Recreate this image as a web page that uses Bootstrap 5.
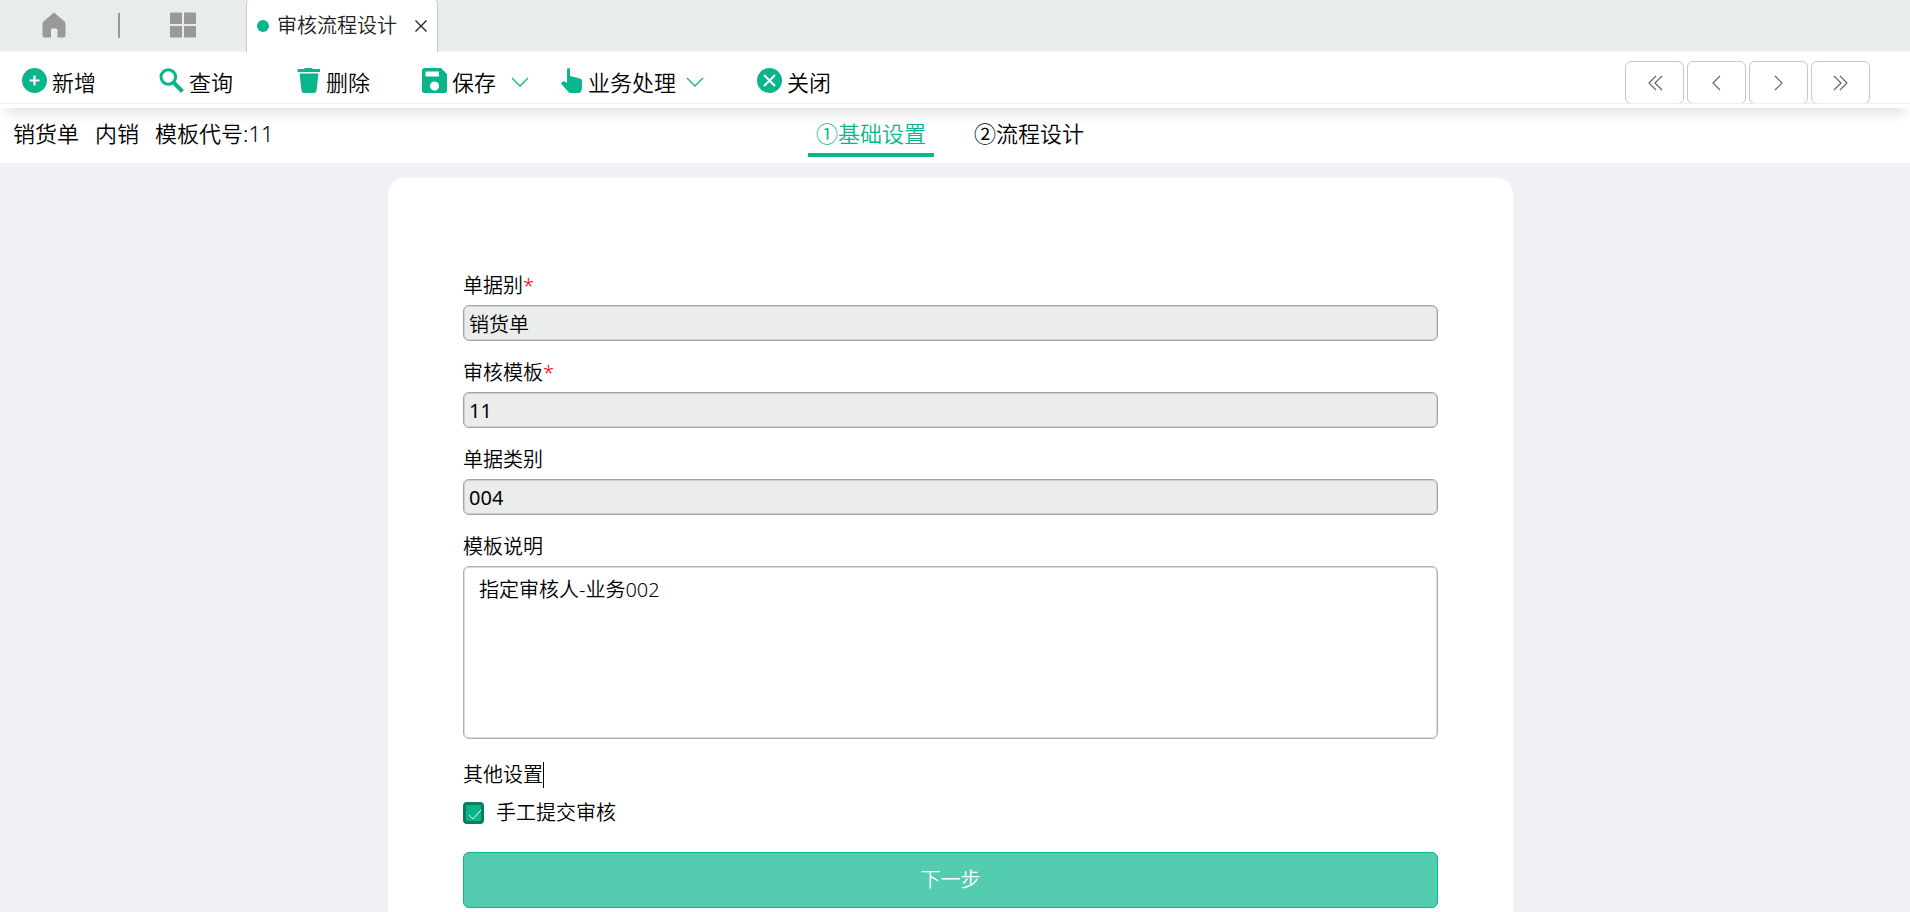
<!DOCTYPE html>
<html lang="zh-CN">
<head>
<meta charset="utf-8">
<meta name="viewport" content="width=device-width, initial-scale=1">
<title>审核流程设计</title>
<link href="https://cdn.jsdelivr.net/npm/bootstrap@5.3.0/dist/css/bootstrap.min.css" rel="stylesheet">
<style>
  :root { --brand: #0bb58b; }
  body { font-family: "Noto Sans", "Noto Sans CJK SC", sans-serif; font-weight: 350; font-size: 20px; line-height: 30px; color: #000; background: #eff1f5; }
  button, input, textarea { font-weight: inherit; }
  svg { display: block; flex: none; }

  .window-bar { height: 50px; background: #e8eceb; padding-left: 42px; }
  .window-bar .plain { color: #999; }
  .divider { width: 2px; height: 25px; margin: 0 48px 0 52px; background: #999; }
  .page-tab { height: 52px; width: 192px; padding: 0 10px; background: #fff; border: 1px solid #c4c8ca; border-width: 0 1px; border-radius: 4px 4px 0 0; color: #222; }
  .dot { width: 12px; height: 12px; background: var(--brand); }

  .toolbar { margin-top: 2px; height: 56px; background: #fff; z-index: 1; box-shadow: 0 12px 10px -5px rgba(0, 0, 0, .09); }
  .toolbar-inner { height: 52px; padding-left: 22px; padding-right: 40px; border-bottom: 1px solid #eee; overflow: hidden; }
  .plain { border: 0; background: none; padding: 0; }
  .tool { font-size: 22px; line-height: 28px; gap: 5px; color: #000; white-space: nowrap; margin-right: 63px; }
  .tool.mid { margin-right: 52px; }
  .tool.near { margin-right: 30px; }
  .tool svg { color: var(--brand); }
  .tool .arrow { margin-top: 8px; }
  .pager { gap: 3px; padding-top: 9px; }
  .pager button { width: 59px; height: 43px; background: #fff; border: 1px solid #c8c8c8; border-radius: 6px; color: #666; }

  .subheader { height: 55px; background: #fff; font-size: 22px; padding: 0 23px 0 13px; }
  .doc-info { padding-top: 10px; }
  .steps { gap: 32px; }
  .steps a { padding: 10px 8px 5px; height: 49px; color: #000; text-decoration: none; border-bottom: 4px solid transparent; }
  .steps a.active { color: var(--brand); border-color: var(--brand); }

  main { padding: 15px 9px 0 0; min-height: 0; overflow: hidden; }
  .panel { width: 100%; max-width: 1125px; padding: 93px 75px 40px; background: #fff; border-radius: 16px 16px 0 0; }
  .panel label, .section-title { display: block; margin-bottom: 4px; }
  .section-title { padding-top: 4px; margin-bottom: 8px; }
  .req { color: red; }
  .field { margin-bottom: 17px; }
  .box { display: block; width: 100%; height: 36px; padding: 0 5px; color: #000; border: 1px solid #a3a5a4; border-radius: 6px; box-shadow: inset 0 0 0 1px #cfd1d0; background: #ebedec; }
  .box.code { font-weight: 400; }
  textarea.box { height: 173px; padding: 8px 15px; background: #fff; border-color: #b0b0b0; box-shadow: inset 0 0 0 1px #dcdcdc; resize: none; }
  .caret { width: 1px; height: 26px; background: #000; }
  .tick { appearance: none; width: 21px; height: 22px; margin: 0; border: 3px solid #07805f; border-radius: 4px; background: var(--brand) url("data:image/svg+xml,%3Csvg xmlns='http://www.w3.org/2000/svg' viewBox='0 0 15 16'%3E%3Cpath d='M3 10l4 4 8-9' fill='none' stroke='%23fff'/%3E%3C/svg%3E"); }
  .next { height: 56px; background: #54ccb0; border: 1px solid var(--brand); border-radius: 6px; color: #fff; }
</style>
</head>
<body>
<div class="vh-100 d-flex flex-column">
  <div class="window-bar d-flex align-items-start flex-shrink-0">
    <nav class="d-flex align-items-center h-100">
      <button class="plain" type="button" aria-label="首页">
        <svg width="24" height="26" viewBox="0 0 24 26" fill="currentColor"><path d="M12 0.500L22.500 9.500Q23.500 10.500 23.500 12V23.500Q23.500 25.500 21.500 25.500H15.500V18Q15.500 16.500 14 16.500H10Q9 16.500 9 18V25.500H2.500Q0.500 25.500 0.500 23.500V12Q0.500 10.500 1.500 9.500Z"/></svg>
      </button>
      <span class="divider"></span>
      <button class="plain" type="button" aria-label="应用">
        <svg width="30" height="26" viewBox="0 0 30 26" fill="currentColor"><rect x="2" y="0.500" width="12" height="11.500" rx="1"/><rect x="16" y="0.500" width="12" height="11.500" rx="1"/><rect x="2" y="14" width="12" height="11.500" rx="1"/><rect x="16" y="14" width="12" height="11.500" rx="1"/></svg>
      </button>
    </nav>
    <div class="page-tab d-flex align-items-center position-relative z-2 ms-5">
      <span class="dot rounded-circle"></span>
      <span class="ms-2 text-nowrap">审核流程设计</span>
      <button class="plain ms-auto" type="button" aria-label="关闭标签"><svg width="12" height="12" viewBox="0 0 12 12" fill="none" stroke="#222" stroke-width="1.300"><path d="M.5 .5l11 11M11.500 .5l-11 11"/></svg></button>
    </div>
  </div>

  <div class="toolbar position-relative flex-shrink-0">
    <div class="toolbar-inner d-flex align-items-start">
      <div class="d-flex align-items-start pt-3">
        <button class="plain tool d-flex align-items-start" type="button">
          <svg width="25" height="25" viewBox="0 0 25 25"><circle cx="12.500" cy="12.500" r="12.500" fill="currentColor"/><path d="M12.500 7.500v10M7.500 12.500h10" stroke="#fff" stroke-width="2.200"/></svg>新增</button>
        <button class="plain tool d-flex align-items-start" type="button">
          <svg width="25" height="25" viewBox="0 0 25 25" fill="none" stroke="currentColor"><circle cx="9.300" cy="9" r="7.300" stroke-width="3"/><path d="M14.500 14.500L23.500 23.500" stroke-width="4"/></svg>查询</button>
        <button class="plain tool mid d-flex align-items-start" type="button">
          <svg width="25" height="25" viewBox="0 0 25 25" fill="currentColor"><path d="M1.500 1H8L9 0H16L17 1H24V4H1.500ZM3.500 5.500H22.500L20.500 22.500Q20.200 25 18 25H8Q6 25 5.500 22.500Z"/></svg>删除</button>
        <button class="plain tool near d-flex align-items-start" type="button">
          <svg width="25" height="25" viewBox="0 0 25 25" fill="currentColor" fill-rule="evenodd"><path d="M2.500 0H19L25 6V22.500Q25 25 22.500 25H2.500Q0 25 0 22.500V2.500Q0 0 2.500 0ZM3.500 3.500V8.500H17V3.500ZM12.500 13.500a4.500 4.500 0 1 0 .01 0Z"/></svg>保存
          <svg class="arrow ms-2" width="20" height="12" viewBox="0 0 20 12" fill="none" stroke="currentColor" stroke-width="1.300"><path d="M3 2l8 8 8-8"/></svg></button>
        <button class="plain tool mid d-flex align-items-start" type="button">
          <svg width="24" height="25" viewBox="0 0 24 25" fill="currentColor"><path d="M8 1.500Q8 0 9.500 0T11 1.500V8L21 10.500Q23 11 23 13V20Q22.500 25 19.500 25H11.500Q10 25 9 23.500L2 15.500Q3.500 12.500 6 13.500L8 15Z"/></svg>业务处理
          <svg class="arrow ms-1" width="20" height="12" viewBox="0 0 20 12" fill="none" stroke="currentColor" stroke-width="1.300"><path d="M2 2l8 8 8-8"/></svg></button>
        <button class="plain tool d-flex align-items-start" type="button">
          <svg width="25" height="25" viewBox="0 0 25 25"><circle cx="12.500" cy="12.500" r="12.500" fill="currentColor"/><path d="M7 7l11 11M18 7L7 18" stroke="#fff" stroke-width="2"/></svg>关闭</button>
      </div>
      <div class="pager d-flex ms-auto">
        <button type="button" class="p-0" aria-label="首张"><svg class="mx-auto" width="16" height="16" viewBox="0 0 16 16" fill="none" stroke="currentColor" stroke-width="1.200"><path d="M9 1L2 8l7 7M15 1L8 8l7 7"/></svg></button>
        <button type="button" class="p-0" aria-label="上一张"><svg class="mx-auto" width="16" height="16" viewBox="0 0 16 16" fill="none" stroke="currentColor" stroke-width="1.200"><path d="M11 1L4 8l7 7"/></svg></button>
        <button type="button" class="p-0" aria-label="下一张"><svg class="mx-auto" width="16" height="16" viewBox="0 0 16 16" fill="none" stroke="currentColor" stroke-width="1.200"><path d="M4 1l7 7-7 7"/></svg></button>
        <button type="button" class="p-0" aria-label="末张"><svg class="mx-auto" width="16" height="16" viewBox="0 0 16 16" fill="none" stroke="currentColor" stroke-width="1.200"><path d="M1 1l7 7-7 7M7 1l7 7-7 7"/></svg></button>
      </div>
    </div>
  </div>

  <header class="subheader d-flex flex-shrink-0">
    <div class="doc-info d-flex gap-3 flex-fill w-25 text-nowrap"><span>销货单</span><span>内销</span><span>模板代号:11</span></div>
    <nav class="steps d-flex align-items-start text-nowrap">
      <a href="#base" class="active">①基础设置</a>
      <a href="#flow">②流程设计</a>
    </nav>
    <div class="flex-fill w-25"></div>
  </header>

  <main class="flex-fill d-flex justify-content-center">
    <form class="panel" id="base">
      <div class="field"><label for="kind">单据别<span class="req">*</span></label><input class="box" id="kind" value="销货单" readonly></div>
      <div class="field"><label for="tpl">审核模板<span class="req">*</span></label><input class="box code" id="tpl" value="11" readonly></div>
      <div class="field"><label for="cat">单据类别</label><input class="box code" id="cat" value="004" readonly></div>
      <div class="field"><label for="desc">模板说明</label><textarea class="box" id="desc">指定审核人-业务002</textarea></div>
      <div class="section-title d-flex align-items-center">其他设置<span class="caret"></span></div>
      <div class="d-flex align-items-center mb-4">
        <input type="checkbox" class="tick" id="manual" checked>
        <label for="manual" class="mb-0 ms-2 ps-1">手工提交审核</label>
      </div>
      <button type="button" class="next w-100">下一步</button>
    </form>
  </main>
</div>
<script src="https://cdn.jsdelivr.net/npm/bootstrap@5.3.0/dist/js/bootstrap.bundle.min.js"></script>
</body>
</html>
